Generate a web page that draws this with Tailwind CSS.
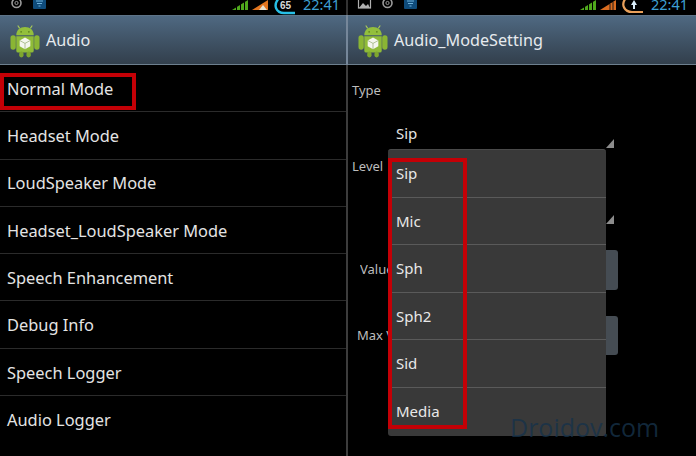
<!DOCTYPE html>
<html lang="en">
<head>
  <meta charset="UTF-8" />
  <title>Audio</title>
  <script src="https://cdn.jsdelivr.net/npm/@tailwindcss/browser@4"></script>
</head>
<body class="w-[696px] h-[456px] overflow-hidden bg-black flex font-['Noto_Sans',sans-serif] text-[#e4e4e4]">

  <!-- left: mode list -->
  <section class="relative w-[346px] h-full shrink-0 flex flex-col">
    <div class="h-[15px] overflow-hidden relative">
      <svg width="346" height="15" class="block">
        <circle cx="16.500" cy="3" r="4.500" fill="none" stroke="#9a9a9a" stroke-width="1.600"/>
        <circle cx="16.500" cy="3" r="1.600" fill="none" stroke="#9a9a9a"/>
        <rect x="33" y="-4" width="13" height="13" rx="1" fill="#0f4c7c"/>
        <path d="M36 1h7M37 3.500h5M38.500 6h2" stroke="#6fb3dd" stroke-width="1"/>
        <path d="M232 10L248 0V10Z" fill="#4fa81c"/>
        <path d="M236.500 10V4M240.500 10V2M244.500 10V0" stroke="#000" stroke-width="1"/>
        <path d="M252 10L268 0V10Z" fill="#e2751f"/>
        <path d="M259 10l4-5 4 5z" fill="#e9e2d0"/>
        <path d="M279 -2C272 6 277 13 284 13H295" fill="none" stroke="#27bfe6" stroke-width="2.400"/>
        <text x="280" y="9" font-size="10" font-weight="700" fill="#d8d8d8" font-family="Liberation Sans">65</text>
        <text x="303" y="9.500" font-size="14.500" fill="#3ea0d4" font-family="Noto Sans">22:41</text>
      </svg>
    </div>
    <header class="h-[50px] flex items-center gap-[6px] pl-[10px] border-t border-b border-t-[#5e7488] border-b-[#6d7f8e] bg-gradient-to-b from-[#4f6982] to-[#323f4c]">
      <svg width="30" height="36" viewBox="0 0 31 36" class="shrink-0">
        <path d="M8 3l2 3M23 3l-2 3" stroke="#a6c85a" stroke-width="1.200"/>
        <path d="M6.500 13C6.500 7.500 10.500 4.500 15.500 4.500S24.500 7.500 24.500 13Z" fill="#93bf3c"/>
        <circle cx="11.500" cy="9.500" r="0.900" fill="#5f8420"/>
        <circle cx="19.500" cy="9.500" r="0.900" fill="#5f8420"/>
        <rect x="0.500" y="13" width="5.500" height="15" rx="2.700" fill="#8ab534"/>
        <rect x="25" y="13" width="5.500" height="15" rx="2.700" fill="#8ab534"/>
        <path d="M6.500 14H24.500V29a2 2 0 0 1-2 2H8.500a2 2 0 0 1-2-2Z" fill="#8fbb38"/>
        <rect x="9.500" y="30" width="4.500" height="6" rx="2.200" fill="#7ea62e"/>
        <rect x="17" y="30" width="4.500" height="6" rx="2.200" fill="#7ea62e"/>
        <path d="M15.500 15.500l5.500 3v6l-5.500 3-5.500-3v-6Z" fill="#f4f6ee"/>
        <path d="M10 18.500l5.500 3 5.500-3M15.500 21.500v6" fill="none" stroke="#8fa86a" stroke-width="0.700"/>
      </svg>
      <h1 class="text-[16.200px] leading-none text-[#e6eaee]">Audio</h1>
    </header>
    <ul class="flex flex-col text-[16.400px]">
      <li class="h-[47.300px] flex items-center px-[7px] pt-[2px] border-b border-[#2b2b2b]">Normal Mode</li>
      <li class="h-[47.300px] flex items-center px-[7px] pt-[2px] border-b border-[#2b2b2b]">Headset Mode</li>
      <li class="h-[47.300px] flex items-center px-[7px] pt-[2px] border-b border-[#2b2b2b]">LoudSpeaker Mode</li>
      <li class="h-[47.300px] flex items-center px-[7px] pt-[2px] border-b border-[#2b2b2b]">Headset_LoudSpeaker Mode</li>
      <li class="h-[47.300px] flex items-center px-[7px] pt-[2px] border-b border-[#2b2b2b]">Speech Enhancement</li>
      <li class="h-[47.300px] flex items-center px-[7px] pt-[2px] border-b border-[#2b2b2b]">Debug Info</li>
      <li class="h-[47.300px] flex items-center px-[7px] pt-[2px] border-b border-[#2b2b2b]">Speech Logger</li>
      <li class="h-[47.300px] flex items-center px-[7px] pt-[2px]">Audio Logger</li>
    </ul>
    <div class="absolute left-0 top-[73px] w-[136px] h-[37px] border-[4px] border-[#c40006]"></div>
  </section>

  <div class="w-[2px] h-full shrink-0 flex flex-col bg-[#3c3c3c]">
    <div class="h-[15px] bg-[#333333]"></div>
    <div class="h-[50px] bg-[#76879a]"></div>
  </div>

  <!-- right: mode setting with open dropdown -->
  <section class="relative w-[348px] h-full shrink-0 flex flex-col">
    <div class="h-[15px] overflow-hidden">
      <svg width="348" height="15" class="block">
        <rect x="10.500" y="-3" width="12" height="11" fill="none" stroke="#b0b0b0" stroke-width="1.200"/>
        <path d="M11 8l4-5 3 3 2-2 2 4z" fill="#b0b0b0"/>
        <circle cx="39.500" cy="3" r="4.500" fill="none" stroke="#9a9a9a" stroke-width="1.600"/>
        <circle cx="39.500" cy="3" r="1.600" fill="none" stroke="#9a9a9a"/>
        <rect x="56" y="-4" width="13" height="13" rx="1" fill="#0f4c7c"/>
        <path d="M59 1h7M60 3.500h5M61.500 6h2" stroke="#6fb3dd" stroke-width="1"/>
        <path d="M232 10L248 0V10Z" fill="#4fa81c"/>
        <path d="M236.500 10V4M240.500 10V2M244.500 10V0" stroke="#000" stroke-width="1"/>
        <path d="M252 10L268 0V10Z" fill="#d96c20"/>
        <path d="M262 10V4M265 10V2" stroke="#1c1c1c" stroke-width="1"/>
        <path d="M278 -2C272 5 277 12 284 12H295" fill="none" stroke="#e9a05a" stroke-width="2.200"/>
        <path d="M286 0l-3 5h2v4h2V5h2Z" fill="#d9ecf8"/>
        <text x="303" y="9.500" font-size="14.500" fill="#3ea0d4" font-family="Noto Sans">22:41</text>
      </svg>
    </div>
    <header class="h-[50px] flex items-center gap-[6px] pl-[10px] border-t border-b border-t-[#5e7488] border-b-[#6d7f8e] bg-gradient-to-b from-[#4f6982] to-[#323f4c]">
      <svg width="30" height="36" viewBox="0 0 31 36" class="shrink-0">
        <path d="M8 3l2 3M23 3l-2 3" stroke="#a6c85a" stroke-width="1.200"/>
        <path d="M6.500 13C6.500 7.500 10.500 4.500 15.500 4.500S24.500 7.500 24.500 13Z" fill="#93bf3c"/>
        <circle cx="11.500" cy="9.500" r="0.900" fill="#5f8420"/>
        <circle cx="19.500" cy="9.500" r="0.900" fill="#5f8420"/>
        <rect x="0.500" y="13" width="5.500" height="15" rx="2.700" fill="#8ab534"/>
        <rect x="25" y="13" width="5.500" height="15" rx="2.700" fill="#8ab534"/>
        <path d="M6.500 14H24.500V29a2 2 0 0 1-2 2H8.500a2 2 0 0 1-2-2Z" fill="#8fbb38"/>
        <rect x="9.500" y="30" width="4.500" height="6" rx="2.200" fill="#7ea62e"/>
        <rect x="17" y="30" width="4.500" height="6" rx="2.200" fill="#7ea62e"/>
        <path d="M15.500 15.500l5.500 3v6l-5.500 3-5.500-3v-6Z" fill="#f4f6ee"/>
        <path d="M10 18.500l5.500 3 5.500-3M15.500 21.500v6" fill="none" stroke="#8fa86a" stroke-width="0.700"/>
      </svg>
      <h1 class="text-[16.200px] leading-none text-[#e6eaee]">Audio_ModeSetting</h1>
    </header>

    <!-- form behind the dropdown -->
    <div class="relative flex-1 text-[13px] text-[#bdbdbd]">
      <p class="pl-[4px] pt-[16px] leading-[18px]">Type</p>
      <div class="ml-[48px] mt-[18px] w-[218px] h-[32px] flex items-center text-[15px] text-[#e4e4e4]">Sip</div>
      <p class="pl-[4px] leading-[18px] pt-[8px]">Level</p>
      <div class="ml-[258px] mt-[40px] w-0 h-0 border-l-[8px] border-b-[9px] border-l-transparent border-b-[#8c8c8c]"></div>
      <div class="flex items-center mt-[26px] h-[40px]">
        <span class="ml-[12px] w-[28px] mr-[218px] overflow-hidden whitespace-nowrap">Value</span>
        <div class="w-[12px] h-[40px] bg-[#454c53] rounded-r-[3px]"></div>
      </div>
      <div class="flex items-center mt-[26px] h-[39px]">
        <span class="ml-[9px] w-[31px] mr-[218px] overflow-hidden whitespace-nowrap">Max Vol</span>
        <div class="w-[12px] h-[39px] bg-[#454c53] rounded-r-[3px]"></div>
      </div>
      <div class="absolute left-[258px] top-[74px] w-0 h-0 border-l-[8px] border-b-[9px] border-l-transparent border-b-[#8c8c8c]"></div>
    </div>

    <ul class="absolute left-[40px] top-[149px] w-[218px] h-[287px] bg-[#393939] rounded-[3px] border-t border-[#4a4a4a] flex flex-col text-[15px] text-[#e8e8e8]">
      <li class="h-[47.500px] flex items-center pl-[8px] border-b border-[#5a5a5a]">Sip</li>
      <li class="h-[47.500px] flex items-center pl-[8px] border-b border-[#5a5a5a]">Mic</li>
      <li class="h-[47.500px] flex items-center pl-[8px] border-b border-[#5a5a5a]">Sph</li>
      <li class="h-[47.500px] flex items-center pl-[8px] border-b border-[#5a5a5a]">Sph2</li>
      <li class="h-[47.500px] flex items-center pl-[8px] border-b border-[#5a5a5a]">Sid</li>
      <li class="h-[47.500px] flex items-center pl-[8px]">Media</li>
    </ul>
    <div class="absolute left-[40px] top-[158px] w-[79px] h-[271px] border-[4px] border-[#c40006]"></div>
    <span class="absolute left-[162px] top-[409px] text-[25px] leading-[36px] font-['Open_Sans',sans-serif] text-[#16324a]/80">Droidov.com</span>
  </section>

</body>
</html>
